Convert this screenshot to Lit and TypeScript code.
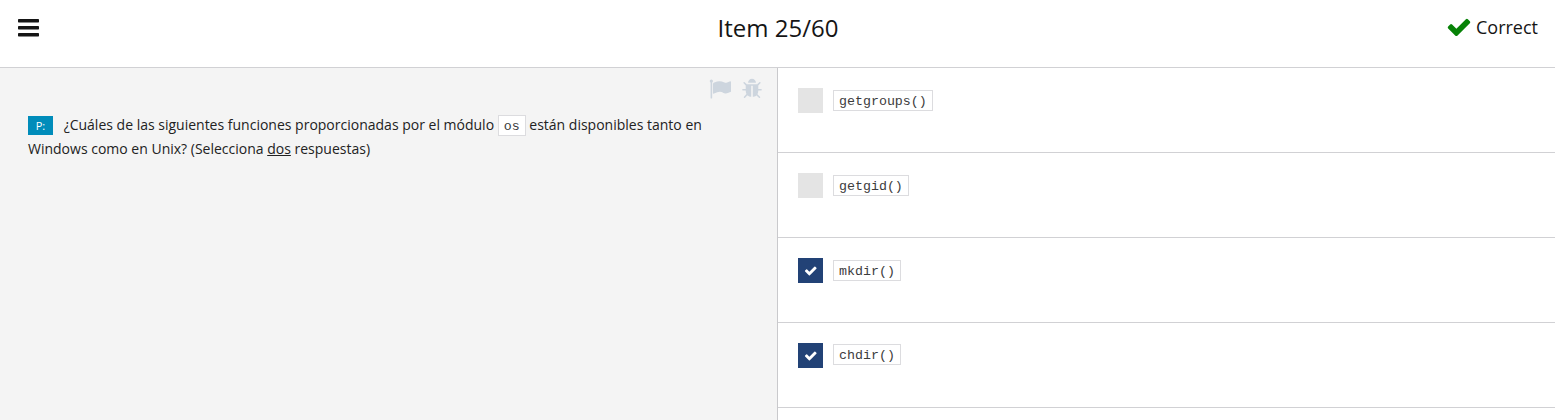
import { LitElement, html, css, svg } from "lit";
import { customElement, property } from "lit/decorators.js";

const CHECK =
  "M1671 566q0 40-28 68l-724 724-136 136q-28 28-68 28t-68-28l-136-136-362-362q-28-28-28-68t28-68l136-136q28-28 68-28t68 28l294 295 656-657q28-28 68-28t68 28l136 136q28 28 28 68z";
const FLAG =
  "M320 256q0 72-64 110v1266q0 13-9.5 22.5t-22.5 9.5h-64q-13 0-22.5-9.5t-9.5-22.5v-1266q-64-38-64-110 0-53 37.5-90.5t90.5-37.5 90.5 37.5 37.5 90.5zm1472 64v763q0 25-12.5 38.5t-39.5 27.5q-215 116-369 116-61 0-123.5-22t-108.5-48-115.5-48-142.5-22q-192 0-464 146-17 9-33 9-26 0-45-19t-19-45v-742q0-32 31-55 21-14 79-43 236-120 421-120 107 0 200 29t219 88q38 19 88 19 54 0 117.5-21t110-47 88-47 54.5-21q26 0 45 19t19 45z";
const BUG =
  "M1696 960q0 26-19 45t-45 19h-224q0 171-67 290l208 209q19 19 19 45t-19 45q-18 19-45 19t-45-19l-198-197q-5 5-15 13t-42 28.5-65 36.5-82 29-97 13v-896h-128v896q-51 0-101.5-13.5t-87-33-66-39-43.5-32.5l-15-14-183 207q-20 21-48 21-24 0-43-16-19-18-20.5-44.5t15.500-46.500l202-227q-58-114-58-274h-224q-26 0-45-19t-19-45 19-45 45-19h224v-294l-173-173q-19-19-19-45t19-45 45-19 45 19l173 173h844l173-173q19-19 45-19t45 19 19 45-19 45l-173 173v294h224q26 0 45 19t19 45zm-480-576h-640q0-133 93.500-226.500t226.500-93.500 226.500 93.500 93.500 226.500z";
const BARS = svg`<rect x="128" y="256" width="1536" height="256" rx="50"/><rect x="128" y="768" width="1536" height="256" rx="50"/><rect x="128" y="1280" width="1536" height="256" rx="50"/>`;

const codeStyles = css`
  code {
    display: inline-block;
    box-sizing: border-box;
    height: 21px;
    padding: 2px 5px 0;
    border: 1px solid #dcdcdf;
    background: #fff;
    color: #3c3c3c;
    font: 13.3px/17px "Courier New", "Liberation Mono", monospace;
  }
`;

@customElement("answer-option")
export class AnswerOption extends LitElement {
  @property() label = "";
  @property({ type: Boolean }) checked = false;

  static styles = [
    codeStyles,
    css`
      :host {
        display: flex;
        align-items: flex-start;
        box-sizing: border-box;
        height: 85px;
        padding: 20px;
        gap: 10px;
        border-bottom: 1px solid #d1d1d4;
      }
      .box {
        display: flex;
        align-items: center;
        justify-content: center;
        width: 25px;
        height: 25px;
        background: #e4e4e4;
      }
      .on {
        background: #224276;
      }
      svg {
        width: 13.5px;
        height: 13.5px;
        fill: #fff;
      }
      code {
        margin-top: 2px;
      }
      :host(:last-of-type) code {
        margin-top: 1px;
      }
    `,
  ];

  render() {
    return html`
      <span class="box ${this.checked ? "on" : ""}">
        ${this.checked ? html`<svg viewBox="0 0 1792 1792"><path d=${CHECK} /></svg>` : ""}
      </span>
      <code>${this.label}</code>
    `;
  }
}

@customElement("app-root")
export class AppRoot extends LitElement {
  private options = [
    { label: "getgroups()", checked: false },
    { label: "getgid()", checked: false },
    { label: "mkdir()", checked: true },
    { label: "chdir()", checked: true },
  ];

  static styles = [
    codeStyles,
    css`
      :host {
        display: flex;
        flex-direction: column;
        height: 420px;
        overflow: hidden;
        background: #fff;
        color: #222;
        font-family: "Open Sans", "Noto Sans", sans-serif;
      }
      header {
        display: grid;
        grid-template-columns: 1fr auto 1fr;
        box-sizing: border-box;
        height: 68px;
        padding: 0 17px 0 18px;
        border-bottom: 1px solid #d1d1d4;
        color: #151515;
      }
      .bars {
        width: 21px;
        height: 17.5px;
        margin-top: 19px;
      }
      h1 {
        margin: 11px 0 0;
        font-size: 24px;
        font-weight: 400;
        line-height: 33px;
      }
      .result {
        display: flex;
        justify-content: flex-end;
        gap: 4px;
        margin-top: 15px;
        font-size: 18px;
        line-height: 25px;
      }
      .result svg {
        width: 26px;
        height: 26px;
        margin-top: -1px;
        fill: #078207;
      }
      main {
        display: grid;
        grid-template-columns: 778px 1fr;
        flex: 1;
        min-height: 0;
      }
      .question {
        box-sizing: border-box;
        padding: 10px 14px 0 28px;
        border-right: 1px solid #c9c9cc;
        background: #f4f4f4;
      }
      .tools {
        display: flex;
        justify-content: flex-end;
        gap: 10px;
        height: 35px;
      }
      .tools svg {
        width: 22px;
        height: 22px;
        fill: #cdd5de;
      }
      p {
        width: 700px;
        margin: 0;
        font-size: 14px;
        line-height: 24px;
      }
      .tag {
        display: inline-block;
        width: 25px;
        height: 19px;
        margin-right: 7px;
        background: #008cba;
        color: #fff;
        font-size: 11px;
        line-height: 20px;
        text-align: center;
      }
    `,
  ];

  render() {
    return html`
      <header>
        <svg class="bars" viewBox="128 256 1536 1280" fill="#151515">${BARS}</svg>
        <h1>Item 25/60</h1>
        <div class="result">
          <svg viewBox="0 0 1792 1792"><path d=${CHECK} /></svg>
          <span>Correct</span>
        </div>
      </header>
      <main>
        <section class="question">
          <div class="tools">
            <svg viewBox="0 0 1792 1792"><path d=${FLAG} /></svg>
            <svg viewBox="0 0 1792 1792"><path d=${BUG} /></svg>
          </div>
          <p>
            <span class="tag">P:</span> ¿Cuáles de las siguientes funciones proporcionadas por el módulo
            <code>os</code> están disponibles tanto en<br />Windows como en Unix? (Selecciona
            <u>dos</u> respuestas)
          </p>
        </section>
        <section>
          ${this.options.map(
            (o) => html`<answer-option .label=${o.label} .checked=${o.checked}></answer-option>`
          )}
        </section>
      </main>
    `;
  }
}
